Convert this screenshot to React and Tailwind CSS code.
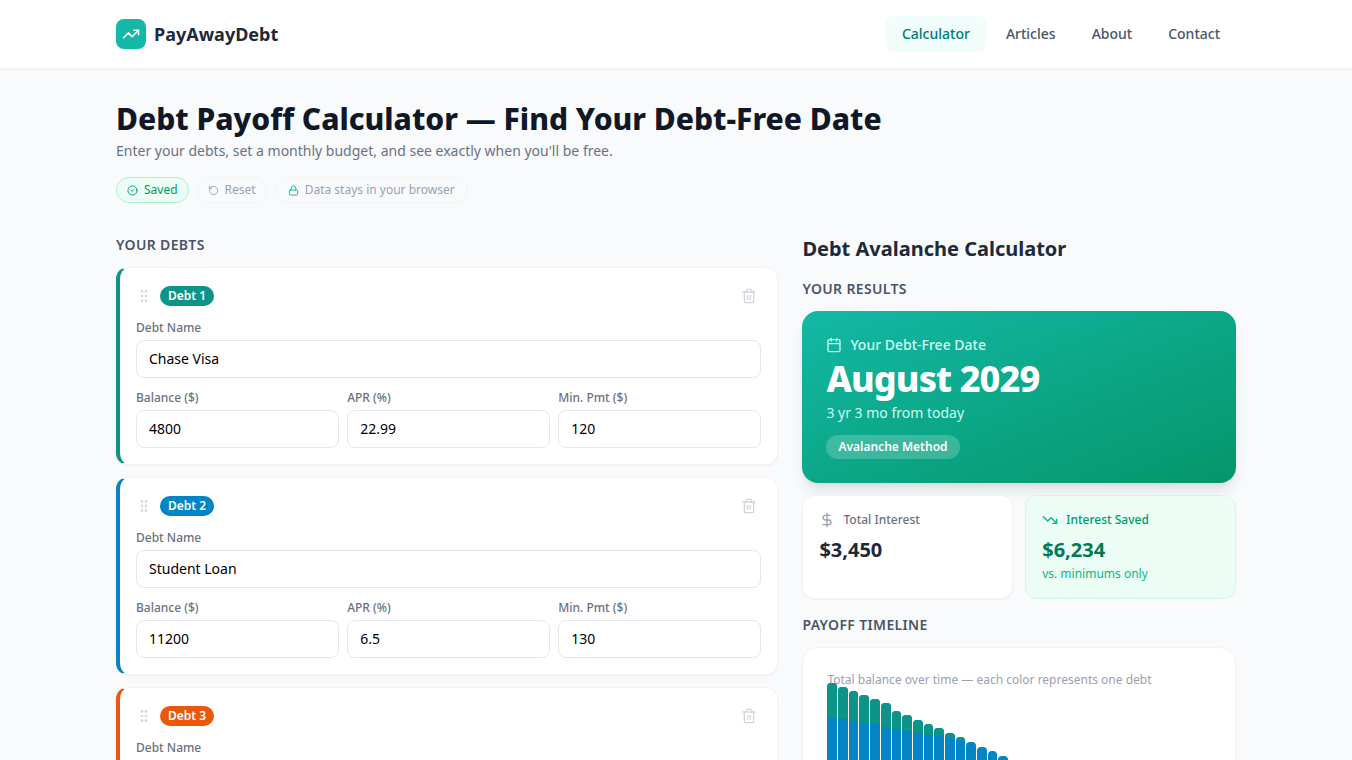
import React from "react";
import {
  TrendingUp,
  TrendingDown,
  CircleCheck,
  RotateCcw,
  Lock,
  GripVertical,
  Trash2,
  Calendar,
  DollarSign,
} from "lucide-react";

const NAV = ["Calculator", "Articles", "About", "Contact"];

const DEBTS = [
  { id: 1, name: "Chase Visa", balance: "4800", apr: "22.99", min: "120", edge: "border-l-[#0d9488]", chip: "bg-[#0d9488]" },
  { id: 2, name: "Student Loan", balance: "11200", apr: "6.5", min: "130", edge: "border-l-[#0284c7]", chip: "bg-[#0284c7]" },
  { id: 3, name: "", balance: "", apr: "", min: "", edge: "border-l-[#ea580c]", chip: "bg-[#ea580c]" },
];

// Height of each month's bar, and the part of it that belongs to the first debt.
const TIMELINE = [
  [157, 35], [153, 32], [149, 30], [145, 28], [141, 25], [137, 24], [129, 18], [125, 16], [120, 13],
  [116, 11], [112, 8], [107, 5], [103, 3], [98, 0], [93, 0], [89, 0], [84, 0], [79, 0],
  [74, 0], [70, 0], [65, 0], [61, 0], [56, 0], [52, 0], [47, 0], [43, 0], [39, 0],
  [35, 0], [31, 0], [27, 0], [23, 0], [19, 0], [15, 0], [11, 0], [7, 0], [3, 0],
];

function Field({ id, label, value }) {
  return (
    <div className="min-w-0">
      <label htmlFor={id} className="mb-1 block text-xs font-medium text-gray-500">
        {label}
      </label>
      <input
        id={id}
        defaultValue={value}
        className="block w-full rounded-lg border border-gray-200 bg-white px-3 py-2 text-sm text-black outline-none focus:border-teal-500"
      />
    </div>
  );
}

function DebtCard({ debt }) {
  const key = `debt-${debt.id}`;
  return (
    <article className={`rounded-xl border border-l-4 border-gray-100 bg-white p-4 shadow-xs ${debt.edge}`}>
      <div className="mb-3 flex items-center justify-between">
        <div className="flex items-center gap-2">
          <GripVertical size={16} className="text-gray-300" />
          <span className={`rounded-full px-2 py-0.5 text-xs font-semibold text-white ${debt.chip}`}>
            Debt {debt.id}
          </span>
        </div>
        <button type="button" aria-label={`Remove debt ${debt.id}`} className="p-1 text-gray-300">
          <Trash2 size={16} />
        </button>
      </div>
      <div className="flex flex-col gap-3">
        <Field id={`${key}-name`} label="Debt Name" value={debt.name} />
        <div className="grid grid-cols-3 gap-2">
          <Field id={`${key}-balance`} label="Balance ($)" value={debt.balance} />
          <Field id={`${key}-apr`} label="APR (%)" value={debt.apr} />
          <Field id={`${key}-min`} label="Min. Pmt ($)" value={debt.min} />
        </div>
      </div>
    </article>
  );
}

function SectionTitle({ children }) {
  return <h3 className="mb-3 text-sm font-semibold tracking-wide text-gray-600 uppercase">{children}</h3>;
}

function Timeline() {
  return (
    <div className="-mt-2 flex h-40 items-end gap-px">
      {TIMELINE.map(([total, first], i) => (
        <div key={i} className="flex flex-1 flex-col overflow-hidden rounded-t-sm bg-[#0284c7]" style={{ height: total }}>
          <div className="bg-[#0d9488]" style={{ height: first }} />
        </div>
      ))}
    </div>
  );
}

export default function App() {
  return (
    <div className="min-h-screen bg-[#f8fafc] font-['Noto_Sans',sans-serif] text-gray-800">
      <header className="border-b border-gray-100 bg-white shadow-xs">
        <div className="mx-auto flex max-w-6xl items-center justify-between px-4 py-4">
          <a href="#home" className="flex items-center gap-2">
            <span className="flex size-[30px] items-center justify-center rounded-lg bg-[#14b8a6] text-white">
              <TrendingUp size={18} />
            </span>
            <span className="text-lg font-bold text-gray-800">PayAwayDebt</span>
          </a>
          <nav className="flex gap-1">
            {NAV.map((item, i) => (
              <a
                key={item}
                href={`#${item.toLowerCase()}`}
                className={`rounded-lg px-4 py-2 text-sm font-medium ${i === 0 ? "bg-teal-50 text-teal-700" : "text-gray-600"}`}
              >
                {item}
              </a>
            ))}
          </nav>
        </div>
      </header>

      <main className="mx-auto max-w-6xl px-4 pt-8 pb-12">
        <h1 className="text-3xl leading-9 font-extrabold text-gray-900">
          Debt Payoff Calculator — Find Your Debt-Free Date
        </h1>
        <p className="mt-1 text-sm text-gray-500">
          Enter your debts, set a monthly budget, and see exactly when you'll be free.
        </p>
        <div className="mt-4 flex items-center gap-2 text-xs">
          <span className="flex items-center gap-1.5 rounded-full border border-emerald-200 bg-emerald-50 px-2.5 py-1 text-emerald-600">
            <CircleCheck size={11} />
            Saved
          </span>
          <button type="button" className="flex items-center gap-1.5 rounded-full border border-gray-100 px-2.5 py-1 text-gray-400">
            <RotateCcw size={11} />
            Reset
          </button>
          <span className="flex items-center gap-1.5 rounded-full border border-gray-100 px-3 py-1 text-gray-400">
            <Lock size={11} className="text-teal-500" />
            Data stays in your browser
          </span>
        </div>

        <div className="mt-8 grid grid-cols-5 items-start gap-6">
          <section className="col-span-3">
            <SectionTitle>Your Debts</SectionTitle>
            <div className="flex flex-col gap-3">
              {DEBTS.map((debt) => (
                <DebtCard key={debt.id} debt={debt} />
              ))}
            </div>
          </section>

          <section className="col-span-2">
            <h2 className="mb-4 text-xl font-bold text-gray-800">Debt Avalanche Calculator</h2>
            <SectionTitle>Your Results</SectionTitle>
            <div className="rounded-2xl bg-linear-to-br from-[#14b8a6] to-[#059669] p-6 text-white shadow-lg">
              <div className="flex items-center gap-2 text-sm font-medium text-teal-100">
                <Calendar size={16} />
                Your Debt-Free Date
              </div>
              <p className="mt-1 text-4xl leading-10 font-extrabold tracking-tight">August 2029</p>
              <p className="mt-1 text-sm text-teal-100">3 yr 3 mo from today</p>
              <span className="mt-3 inline-block rounded-full bg-white/20 px-3 py-1 text-xs font-semibold">
                Avalanche Method
              </span>
            </div>

            <div className="mt-3 grid grid-cols-2 gap-3">
              <div className="rounded-xl border border-gray-100 bg-white p-4 shadow-xs">
                <div className="flex items-center gap-2 text-xs font-medium text-gray-500">
                  <DollarSign size={16} className="text-gray-400" />
                  Total Interest
                </div>
                <p className="mt-2 text-xl font-bold text-gray-800">$3,450</p>
              </div>
              <div className="rounded-xl border border-emerald-100 bg-emerald-50 p-4">
                <div className="flex items-center gap-2 text-xs font-medium text-emerald-600">
                  <TrendingDown size={16} className="text-emerald-500" />
                  Interest Saved
                </div>
                <p className="mt-2 text-xl font-bold text-emerald-700">$6,234</p>
                <p className="mt-0.5 text-xs text-emerald-500">vs. minimums only</p>
              </div>
            </div>

            <div className="mt-4">
              <SectionTitle>Payoff Timeline</SectionTitle>
              <div className="rounded-2xl border border-gray-100 bg-white p-6 shadow-xs">
                <p className="text-xs text-gray-400">Total balance over time — each color represents one debt</p>
                <Timeline />
              </div>
            </div>
          </section>
        </div>
      </main>
    </div>
  );
}
